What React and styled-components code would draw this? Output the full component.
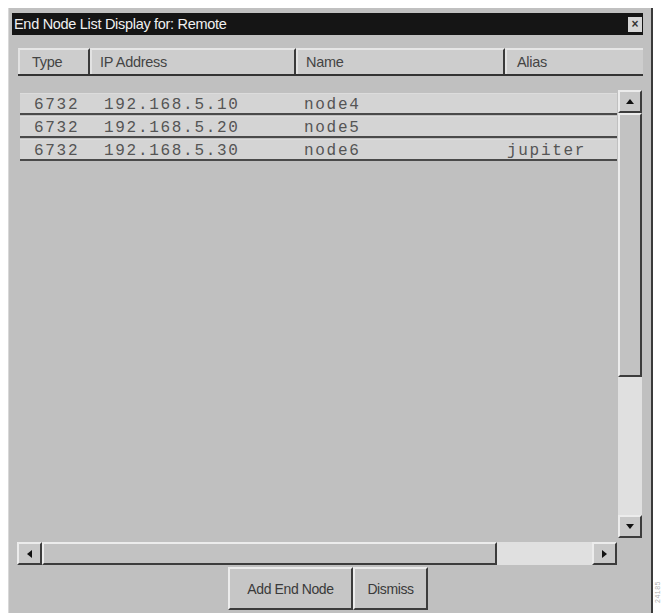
import React from "react"
import styled, { createGlobalStyle } from "styled-components"

const GlobalStyle = createGlobalStyle`
  body {
    margin: 0;
    background: #fff;
    font-family: "Liberation Sans", Arial, sans-serif;
  }
`

const raised = `
  border-top: 2px solid #ececec;
  border-left: 2px solid #ececec;
  border-right: 2px solid #3c3c3c;
  border-bottom: 2px solid #3c3c3c;
`

const Page = styled.div`
  display: flex;
  padding: 8px 0 0 8px;
  height: 605px;
  overflow: hidden;
`

const Window = styled.div`
  width: 645px;
  height: 605px;
  box-sizing: border-box;
  background: #c0c0c0;
  border-left: 1px solid #d8d8d8;
  border-right: 2px solid #3a3a3a;
  padding: 5px 8px 0 3px;
  display: flex;
  flex-direction: column;
`

const TitleBar = styled.div`
  height: 22px;
  background: #151515;
  display: flex;
  align-items: center;
  justify-content: space-between;
  padding: 0 1px 0 2px;
`

const TitleText = styled.span`
  color: #f0f0f0;
  font-size: 14.5px;
  letter-spacing: -0.3px;
`

const CloseBox = styled.div`
  width: 14px;
  height: 15px;
  background: #d6d6d6;
  display: flex;
  align-items: center;
  justify-content: center;
  color: #333;
  font-size: 12px;
  font-weight: bold;
  line-height: 1;
`

const Content = styled.div`
  margin-left: 6px;
  display: flex;
  flex-direction: column;
`

const HeaderRow = styled.div`
  margin-top: 13px;
  height: 28px;
  display: flex;
  border-bottom: 2px solid #333;
  box-sizing: border-box;
`

const HeaderCell = styled.div`
  width: ${p => (p.$w ? `${p.$w}px` : "auto")};
  flex: ${p => (p.$w ? "none" : "1")};
  box-sizing: border-box;
  background: #cdcdcd;
  border-top: 2px solid #e6e6e6;
  border-left: 2px solid #e2e2e2;
  border-right: ${p => (p.$last ? "none" : "2px solid #3a3a3a")};
  padding-left: ${p => p.$pad}px;
  display: flex;
  align-items: center;
  color: #444;
  font-size: 14.5px;
  letter-spacing: -0.3px;
`

const ListArea = styled.div`
  height: 462px;
  display: flex;
`

const RowList = styled.div`
  width: 600px;
  padding: 17px 1px 0 2px;
  box-sizing: border-box;
  display: flex;
  flex-direction: column;
  gap: 1px;
`

const Row = styled.div`
  height: 22px;
  box-sizing: border-box;
  background: #d4d4d4;
  border-top: 1px solid #dcdcdc;
  border-bottom: 2px solid #4a4a4a;
  display: grid;
  grid-template-columns: 70px 200px 203px 1fr;
  padding-left: 14px;
  align-items: end;
`

const Cell = styled.span`
  font-family: "Liberation Mono", "Courier New", monospace;
  font-size: 16px;
  letter-spacing: 1.7px;
  line-height: 15px;
  color: #555;
  white-space: nowrap;
`

const VScroll = styled.div`
  width: 24px;
  height: 448px;
  margin-top: 14px;
  display: flex;
  flex-direction: column;
`

const ArrowButton = styled.div`
  ${raised}
  box-sizing: border-box;
  width: ${p => p.$w}px;
  height: 23px;
  flex: none;
  background: #c8c8c8;
  display: flex;
  align-items: center;
  justify-content: center;
`

const Thumb = styled.div`
  ${raised}
  box-sizing: border-box;
  background: #c2c2c2;
  flex: none;
  width: ${p => (p.$vertical ? "100%" : `${p.$size}px`)};
  height: ${p => (p.$vertical ? `${p.$size}px` : "100%")};
`

const Track = styled.div`
  flex: 1;
  background: #e0e0e0;
`

const HScroll = styled.div`
  width: 600px;
  height: 23px;
  margin: 4px 0 0 -1px;
  display: flex;
`

const ButtonRow = styled.div`
  margin-top: 2px;
  display: flex;
  justify-content: center;
  padding-right: 5px;
`

const PushButton = styled.button`
  ${raised}
  box-sizing: border-box;
  width: ${p => p.$w}px;
  height: 43px;
  background: #c6c6c6;
  font-family: "Liberation Sans", Arial, sans-serif;
  font-size: 14px;
  letter-spacing: -0.4px;
  color: #3a3a3a;
  padding: 0;
  cursor: pointer;
`

const SideStrip = styled.div`
  width: 8px;
  display: flex;
  align-items: flex-end;
  justify-content: center;
  padding-bottom: 10px;
`

const FigureTag = styled.span`
  writing-mode: vertical-rl;
  transform: rotate(180deg);
  font-size: 7px;
  color: #b0b0b0;
  letter-spacing: 0.5px;
`

const Arrow = ({ dir }) => {
  const pts = {
    up: "0,5 4,0 8,5",
    down: "0,0 8,0 4,5",
    left: "5,0 5,8 0,4",
    right: "0,0 0,8 5,4",
  }[dir]
  const horizontal = dir === "left" || dir === "right"
  return (
    <svg width={horizontal ? 5 : 8} height={horizontal ? 8 : 5} viewBox={horizontal ? "0 0 5 8" : "0 0 8 5"}>
      <polygon points={pts} fill="#111" />
    </svg>
  )
}

const nodes = [
  { type: "6732", ip: "192.168.5.10", name: "node4", alias: "" },
  { type: "6732", ip: "192.168.5.20", name: "node5", alias: "" },
  { type: "6732", ip: "192.168.5.30", name: "node6", alias: "jupiter" },
]

export default function App() {
  return (
    <>
      <GlobalStyle />
      <Page>
        <Window>
          <TitleBar>
            <TitleText>End Node List Display for: Remote</TitleText>
            <CloseBox>×</CloseBox>
          </TitleBar>
          <Content>
            <HeaderRow>
              <HeaderCell $w={72} $pad={12}>Type</HeaderCell>
              <HeaderCell $w={206} $pad={8}>IP Address</HeaderCell>
              <HeaderCell $w={209} $pad={8}>Name</HeaderCell>
              <HeaderCell $pad={10} $last>Alias</HeaderCell>
            </HeaderRow>
            <ListArea>
              <RowList>
                {nodes.map(n => (
                  <Row key={n.ip}>
                    <Cell>{n.type}</Cell>
                    <Cell>{n.ip}</Cell>
                    <Cell>{n.name}</Cell>
                    <Cell>{n.alias}</Cell>
                  </Row>
                ))}
              </RowList>
              <VScroll>
                <ArrowButton $w={24}><Arrow dir="up" /></ArrowButton>
                <Thumb $vertical $size={264} />
                <Track />
                <ArrowButton $w={24}><Arrow dir="down" /></ArrowButton>
              </VScroll>
            </ListArea>
            <HScroll>
              <ArrowButton $w={25}><Arrow dir="left" /></ArrowButton>
              <Thumb $size={455} />
              <Track />
              <ArrowButton $w={25}><Arrow dir="right" /></ArrowButton>
            </HScroll>
            <ButtonRow>
              <PushButton $w={125}>Add End Node</PushButton>
              <PushButton $w={75}>Dismiss</PushButton>
            </ButtonRow>
          </Content>
        </Window>
        <SideStrip>
          <FigureTag>24185</FigureTag>
        </SideStrip>
      </Page>
    </>
  )
}
